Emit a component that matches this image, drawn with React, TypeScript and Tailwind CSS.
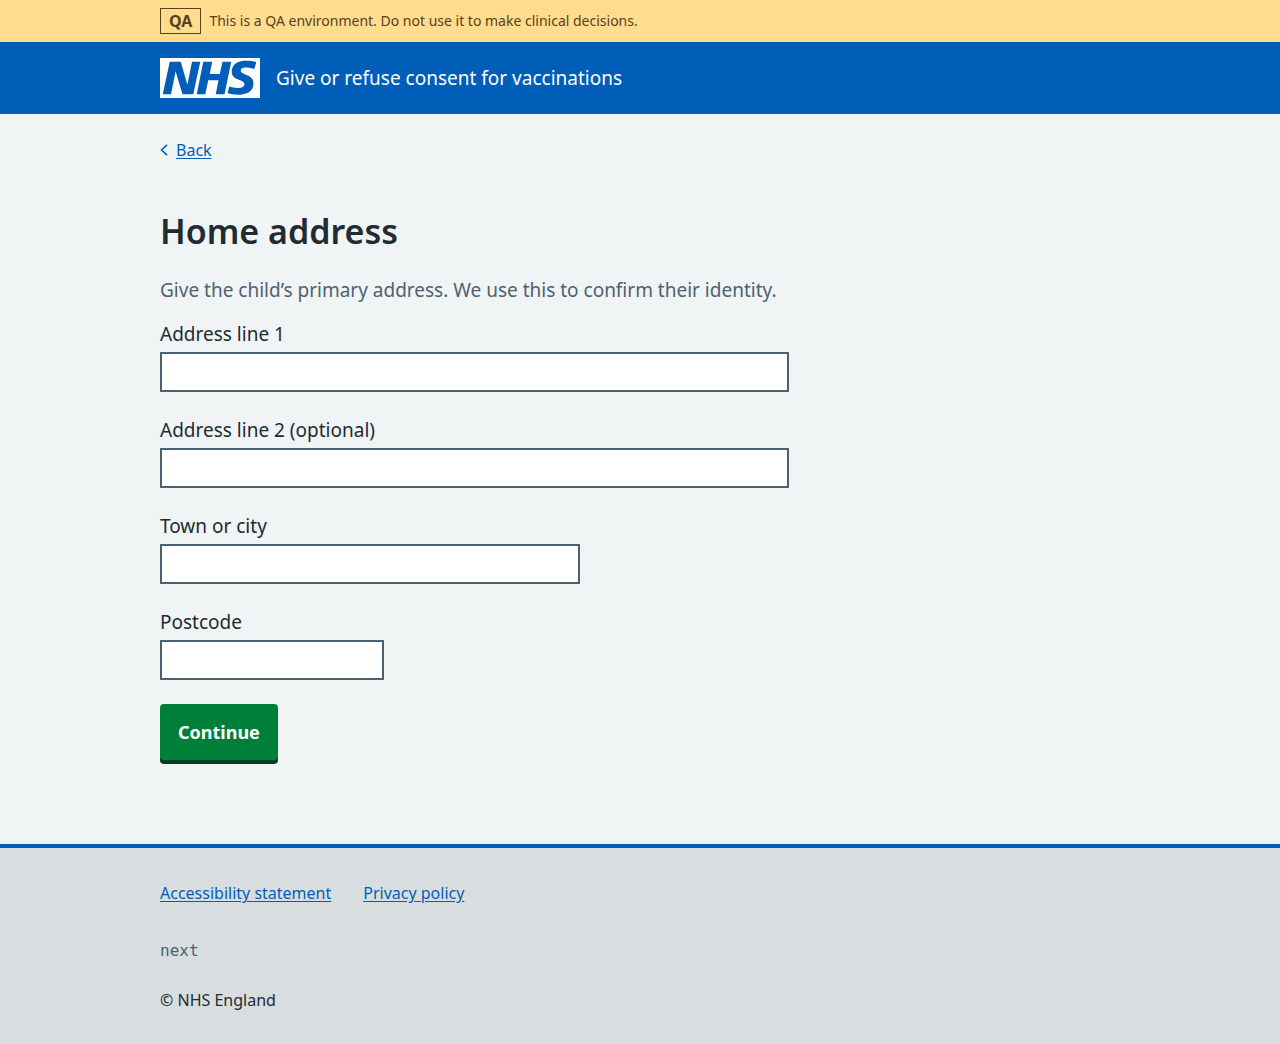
import type { ReactNode } from "react";

function Container({ children, className = "" }: { children: ReactNode; className?: string }) {
  return (
    <div className="px-8">
      <div className={`mx-auto max-w-[960px] ${className}`}>{children}</div>
    </div>
  );
}

function NhsLogo() {
  return (
    <svg className="h-10 w-[100px] shrink-0 text-white" viewBox="0 0 200 80" role="img" aria-label="NHS">
      <path
        fill="currentColor"
        d="M200 0v80H0V0h200Zm-27.5 5.5c-14.5 0-29 5-29 22 0 10.2 7.7 13.5 14.7 16.3l.7.3c5.4 2 10.1 3.9 10.1 8.4 0 6.5-8.5 7.5-14 7.5s-12.5-1.5-16-3.5L135 70c5.5 2 13.5 3.5 20 3.5 15.5 0 32-4.5 32-22.5 0-19.5-25.5-16.5-25.5-25.5 0-5.5 5.5-6.5 12.5-6.5a35 35 0 0 1 14.5 3l4-13.5c-4.5-2-12-3-20-3Zm-131 2h-22l-14 65H22l9-45h.5l13.5 45h21.5l14-65H64l-9 45h-.5l-13-45Zm63 0h-18l-13 65h17l6-28H117l-5.5 28H129l13.5-65H125L119.5 32h-20l5-24.5Z"
      />
    </svg>
  );
}

function Field({ id, label, width }: { id: string; label: string; width: string }) {
  return (
    <div className="mb-6">
      <label htmlFor={id} className="mb-1 block text-[19px] leading-7">
        {label}
      </label>
      <input
        id={id}
        name={id}
        type="text"
        className={`block h-10 w-full border-2 border-[#4c6272] bg-white px-1 text-[19px] outline-none focus:ring-4 focus:ring-[#ffeb3b] ${width}`}
      />
    </div>
  );
}

export default function App() {
  return (
    <div className="flex min-h-screen flex-col bg-[#d8dde0] font-['Noto_Sans',sans-serif] text-[#212b32]">
      <div className="bg-[#ffdc8e] py-2 text-[#594119]">
        <Container className="flex items-center gap-2">
          <strong className="border border-[#594119] px-2 text-[16px] leading-6 font-bold">QA</strong>
          <span className="text-[14px] leading-6">
            This is a QA environment. Do not use it to make clinical decisions.
          </span>
        </Container>
      </div>

      <header className="bg-[#005eb8] py-4 text-white">
        <Container className="flex items-center gap-4">
          <NhsLogo />
          <span className="text-[19px] leading-7">Give or refuse consent for vaccinations</span>
        </Container>
      </header>

      <div className="bg-[#f0f4f5] pt-6 pb-21">
        <Container>
          <a href="#back" className="flex w-fit items-center gap-2 text-[16px] leading-6 text-[#005eb8]">
            <svg className="h-3 w-2" viewBox="0 0 8 12" fill="none" stroke="currentColor" strokeWidth="1.6" aria-hidden="true">
              <path d="M7 .8 1.5 6 7 11.2" />
            </svg>
            <span className="underline underline-offset-2">Back</span>
          </a>

          <main className="pt-11">
            <form onSubmit={(event) => event.preventDefault()}>
              <h1 className="mb-5 text-[34px] leading-[50px] font-semibold">Home address</h1>
              <p className="mb-4 text-[19px] leading-7 text-[#4c6272]">
                Give the child’s primary address. We use this to confirm their identity.
              </p>
              <Field id="address-line-1" label="Address line 1" width="max-w-[629px]" />
              <Field id="address-line-2" label="Address line 2 (optional)" width="max-w-[629px]" />
              <Field id="town" label="Town or city" width="max-w-[420px]" />
              <Field id="postcode" label="Postcode" width="max-w-[224px]" />
              <button
                type="submit"
                className="block h-14 cursor-pointer rounded bg-[#007f3b] px-[18px] text-[18px] leading-7 font-bold text-white shadow-[0_4px_0_#00401e]"
              >
                Continue
              </button>
            </form>
          </main>
        </Container>
      </div>

      <footer className="grow border-t-4 border-[#005eb8] pt-8 pb-8">
        <Container>
          <ul className="mb-8 flex flex-wrap gap-x-8 text-[16px] leading-[26px] text-[#005eb8]">
            <li>
              <a href="#accessibility" className="underline underline-offset-2">Accessibility statement</a>
            </li>
            <li>
              <a href="#privacy" className="underline underline-offset-2">Privacy policy</a>
            </li>
          </ul>
          <p className="mb-6 font-['DejaVu_Sans_Mono',monospace] text-[16px] leading-[26px] text-[#4c6272]">next</p>
          <p className="text-[16px] leading-6">© NHS England</p>
        </Container>
      </footer>
    </div>
  );
}
